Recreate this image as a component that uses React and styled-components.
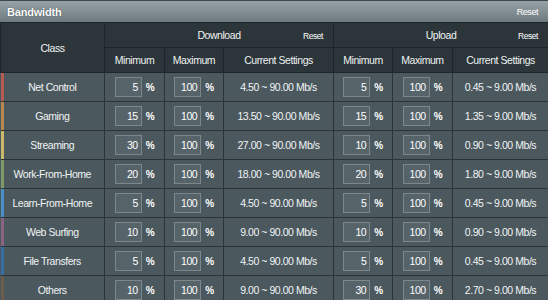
import styled, { createGlobalStyle } from "styled-components";

const GlobalStyle = createGlobalStyle`
  html, body {
    margin: 0;
    padding: 0;
    background: #4b585d;
  }
  body {
    font-family: "Liberation Sans", Arial, sans-serif;
    font-size: 10px;
    letter-spacing: -0.45px;
    color: #ffffff;
  }
`;

const classes = [
  { name: "Net Control", color: "#b85a54", down: 5, up: 5, downText: "4.50 ~ 90.00 Mb/s", upText: "0.45 ~ 9.00 Mb/s" },
  { name: "Gaming", color: "#b8884c", down: 15, up: 15, downText: "13.50 ~ 90.00 Mb/s", upText: "1.35 ~ 9.00 Mb/s" },
  { name: "Streaming", color: "#c9b86a", down: 30, up: 10, downText: "27.00 ~ 90.00 Mb/s", upText: "0.90 ~ 9.00 Mb/s" },
  { name: "Work-From-Home", color: "#7f9a6b", down: 20, up: 20, downText: "18.00 ~ 90.00 Mb/s", upText: "1.80 ~ 9.00 Mb/s" },
  { name: "Learn-From-Home", color: "#4a8fc8", down: 5, up: 5, downText: "4.50 ~ 90.00 Mb/s", upText: "0.45 ~ 9.00 Mb/s" },
  { name: "Web Surfing", color: "#8a6282", down: 10, up: 10, downText: "9.00 ~ 90.00 Mb/s", upText: "0.90 ~ 9.00 Mb/s" },
  { name: "File Transfers", color: "#3a6ea6", down: 5, up: 5, downText: "4.50 ~ 90.00 Mb/s", upText: "0.45 ~ 9.00 Mb/s" },
  { name: "Others", color: "#6c5c4a", down: 10, up: 30, downText: "9.00 ~ 90.00 Mb/s", upText: "2.70 ~ 9.00 Mb/s" },
];

export default function App() {
  return (
    <>
      <GlobalStyle />
      <Panel>
        <TitleBar>
          <Title>Bandwidth</Title>
          <ResetLink>Reset</ResetLink>
        </TitleBar>
        <Table>
          <colgroup>
            <col style={{ width: 104 }} />
            <col style={{ width: 60 }} />
            <col style={{ width: 59 }} />
            <col style={{ width: 110 }} />
            <col style={{ width: 59 }} />
            <col style={{ width: 60 }} />
            <col style={{ width: 96 }} />
          </colgroup>
          <thead>
            <HeadRow>
              <HeadCell rowSpan={2}>Class</HeadCell>
              <GroupCell colSpan={3}>
                Download
                <GroupReset>Reset</GroupReset>
              </GroupCell>
              <GroupCell colSpan={3}>
                Upload
                <GroupReset>Reset</GroupReset>
              </GroupCell>
            </HeadRow>
            <HeadRow>
              <HeadCell>Minimum</HeadCell>
              <HeadCell>Maximum</HeadCell>
              <HeadCell>Current Settings</HeadCell>
              <HeadCell>Minimum</HeadCell>
              <HeadCell>Maximum</HeadCell>
              <HeadCell>Current Settings</HeadCell>
            </HeadRow>
          </thead>
          <tbody>
            {classes.map((c) => (
              <BodyRow key={c.name}>
                <ClassCell $stripe={c.color}>{c.name}</ClassCell>
                <Cell>
                  <Percent value={c.down} />
                </Cell>
                <Cell>
                  <Percent value={100} />
                </Cell>
                <Cell>{c.downText}</Cell>
                <Cell>
                  <Percent value={c.up} />
                </Cell>
                <Cell>
                  <Percent value={100} />
                </Cell>
                <Cell>{c.upText}</Cell>
              </BodyRow>
            ))}
          </tbody>
        </Table>
      </Panel>
    </>
  );
}

function Percent({ value }) {
  return (
    <PercentGroup>
      <NumberBox>{value}</NumberBox>
      <Unit>%</Unit>
    </PercentGroup>
  );
}

const Panel = styled.div`
  width: 548px;
  height: 300px;
  overflow: hidden;
  background: #4b585d;
`;

const TitleBar = styled.div`
  height: 21px;
  display: flex;
  align-items: center;
  justify-content: space-between;
  padding: 0 10px 0 7px;
  border-top: 1px solid #3e474b;
  background: linear-gradient(#97a2a6, #6f7a7e);
`;

const Title = styled.div`
  font-weight: bold;
  font-size: 11px;
  letter-spacing: -0.2px;
  color: #ffffff;
  text-shadow: 0 0 1px #2a3235;
`;

const ResetLink = styled.div`
  font-size: 9px;
  color: #ffffff;
`;

const Table = styled.table`
  width: 548px;
  border-collapse: collapse;
  table-layout: fixed;
`;

const HeadRow = styled.tr`
  height: 25px;
  background: #2c3539;
`;

const HeadCell = styled.th`
  font-weight: normal;
  font-size: 10.5px;
  color: #eef2f3;
  text-align: center;
  border: 1px solid #1f2629;
  padding: 0;
`;

const GroupCell = styled(HeadCell)`
  position: relative;
`;

const GroupReset = styled.span`
  position: absolute;
  right: 10px;
  top: 8px;
  font-size: 8.5px;
  color: #ffffff;
`;

const BodyRow = styled.tr`
  height: 29px;
  background: #4b585d;
`;

const Cell = styled.td`
  text-align: center;
  color: #f0f4f5;
  font-size: 10.5px;
  padding: 0;
  border: 1px solid #2b3336;
`;

const ClassCell = styled(Cell)`
  border-left: none;
  box-shadow: inset 3px 0 0 ${(p) => p.$stripe};
`;

const PercentGroup = styled.div`
  display: inline-flex;
  align-items: center;
  gap: 4px;
  vertical-align: middle;
`;

const NumberBox = styled.div`
  width: 22px;
  height: 18px;
  padding-right: 3px;
  border: 1px solid #7c878b;
  background: #56646a;
  color: #ffffff;
  font-size: 10.5px;
  line-height: 18px;
  text-align: right;
`;

const Unit = styled.span`
  font-size: 10px;
  font-weight: bold;
  color: #ffffff;
`;
